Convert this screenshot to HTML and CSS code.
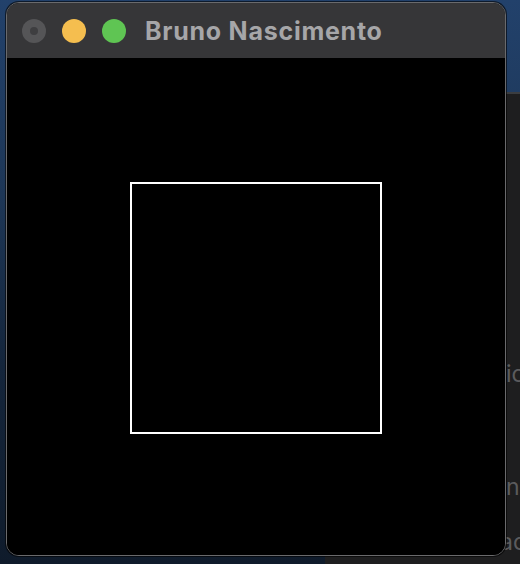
FILE: index.html
```html
<!DOCTYPE html>
<html>
<head>
<meta charset="utf-8">
<link rel="stylesheet" href="styles.css">
</head>
<body>
<div class="desktop">
  <div class="panel">
    <div class="panel-line l1">ic</div>
    <div class="panel-line l2">n</div>
    <div class="panel-line l3">ac</div>
  </div>
  <div class="window">
    <div class="titlebar">
      <div class="lights">
        <span class="light close"><span class="dot"></span></span>
        <span class="light min"></span>
        <span class="light max"></span>
      </div>
      <div class="title">Bruno Nascimento</div>
    </div>
    <div class="content">
      <div class="square"></div>
    </div>
  </div>
</div>
</body>
</html>
```

FILE: styles.css
```css
html, body {
  margin: 0;
  padding: 0;
  width: 520px;
  height: 564px;
  overflow: hidden;
  font-family: "Inter", "Liberation Sans", sans-serif;
}
.desktop {
  position: relative;
  width: 520px;
  height: 564px;
  background: linear-gradient(180deg, #22416b 0%, #1d3656 35%, #14253b 65%, #0f1b2b 100%);
}
.panel {
  position: absolute;
  left: 325px;
  top: 92px;
  right: 0;
  bottom: 0;
  background: #1e1e1f;
  border-top: 2px solid #3b3d40;
  color: #5b5b5d;
  font-size: 23px;
  overflow: hidden;
}
.panel-line {
  position: absolute;
  left: 181px;
  line-height: 26px;
}
.l1 { top: 267px; }
.l2 { top: 380px; }
.l3 { top: 435px; left: 175px; }
.window {
  position: absolute;
  left: 6px;
  top: 2px;
  width: 498px;
  height: 552px;
  border: 1px solid #6a6a6c;
  border-radius: 13px;
  overflow: hidden;
  background: #000;
  box-shadow: 0 0 0 1px rgba(0,0,0,0.6);
  display: flex;
  flex-direction: column;
}
.titlebar {
  height: 55px;
  flex: none;
  background: #363638;
  display: flex;
  align-items: center;
  padding-left: 15px;
  gap: 19px;
}
.lights {
  display: flex;
  gap: 16px;
  align-items: center;
}
.light {
  width: 24px;
  height: 24px;
  border-radius: 50%;
  display: flex;
  align-items: center;
  justify-content: center;
}
.close { background: #555557; }
.close .dot {
  width: 8px;
  height: 8px;
  border-radius: 50%;
  background: #3e3e40;
}
.min { background: #f5be4f; }
.max { background: #5fc553; }
.title {
  color: #a6a6a8;
  font-weight: 700;
  font-size: 25px;
  letter-spacing: 0.75px;
}
.content {
  flex: 1;
  background: #000;
  display: flex;
  justify-content: center;
  align-items: flex-start;
  padding-top: 124px;
}
.square {
  width: 248px;
  height: 248px;
  border: 2px solid #fff;
}
```
